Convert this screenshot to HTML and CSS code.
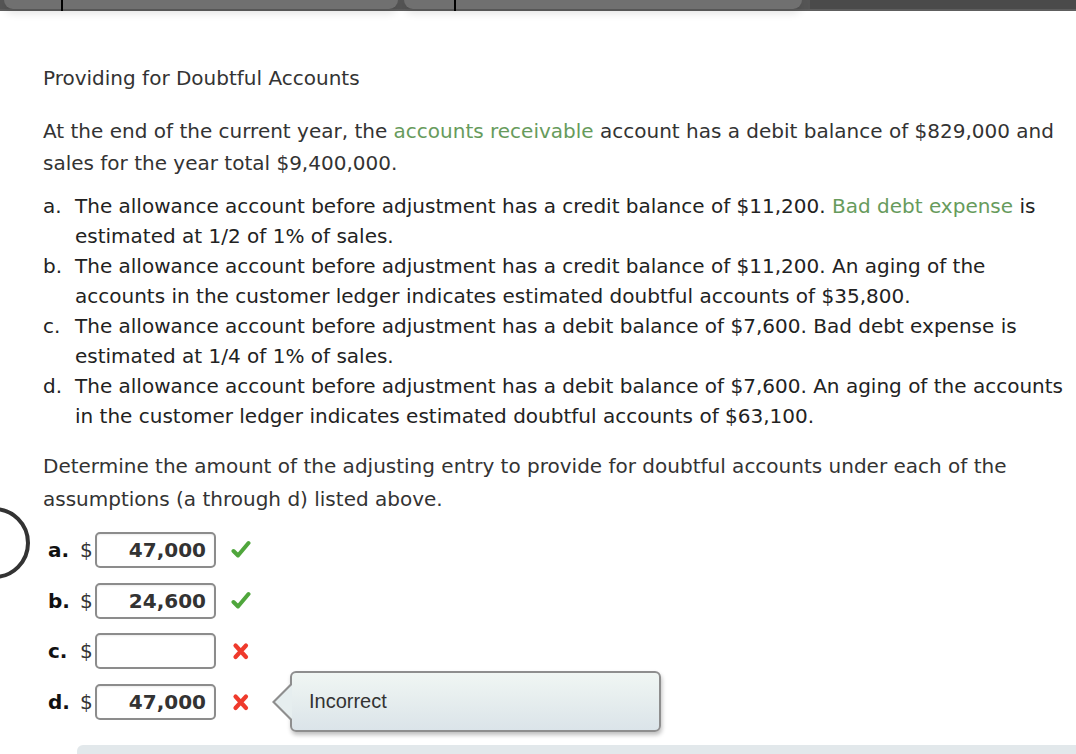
FILE: index.html
```html
<!DOCTYPE html>
<html lang="en">

<head>
    <meta charset="UTF-8">
    <meta name="viewport" content="width=device-width, initial-scale=1.0">
    <title>Providing for Doubtful Accounts</title>
    <link rel="stylesheet" href="styles.css">
</head>

<body>
    <div class="topbar">
        <div class="tab"><span class="cursor cursor-1"></span></div>
        <div class="tab"><span class="cursor cursor-2"></span></div>
        <div class="rest"></div>
    </div>

    <svg class="ring" width="40" height="90" viewBox="0 0 40 90">
        <circle cx="-6" cy="45" r="34" fill="none" stroke="#333" stroke-width="4" />
    </svg>

    <div class="problem">
        <h1 class="title">Providing for Doubtful Accounts</h1>

        <p class="intro">At the end of the current year, the <span class="term">accounts receivable</span> account has a debit balance of $829,000 and<br>sales for the year total $9,400,000.</p>

        <ol class="cases">
            <li><span class="mark">a.</span><span>The allowance account before adjustment has a credit balance of $11,200. <span class="term">Bad debt expense</span> is<br>estimated at 1/2 of 1% of sales.</span></li>
            <li><span class="mark">b.</span><span>The allowance account before adjustment has a credit balance of $11,200. An aging of the<br>accounts in the customer ledger indicates estimated doubtful accounts of $35,800.</span></li>
            <li><span class="mark">c.</span><span>The allowance account before adjustment has a debit balance of $7,600. Bad debt expense is<br>estimated at 1/4 of 1% of sales.</span></li>
            <li><span class="mark">d.</span><span>The allowance account before adjustment has a debit balance of $7,600. An aging of the accounts<br>in the customer ledger indicates estimated doubtful accounts of $63,100.</span></li>
        </ol>

        <p class="ask">Determine the amount of the adjusting entry to provide for doubtful accounts under each of the<br>assumptions (a through d) listed above.</p>

        <div class="answers">
            <div class="row">
                <span class="label">a.</span><span class="dollar">$</span>
                <div class="field">47,000</div>
                <svg class="icon" width="20" height="20" viewBox="0 0 20 20"><path d="M2.5 11 L7 15.5 L17.5 3" fill="none" stroke="#4fa63c" stroke-width="4" stroke-linecap="round" stroke-linejoin="round" /></svg>
            </div>
            <div class="row">
                <span class="label">b.</span><span class="dollar">$</span>
                <div class="field">24,600</div>
                <svg class="icon" width="20" height="20" viewBox="0 0 20 20"><path d="M2.5 11 L7 15.5 L17.5 3" fill="none" stroke="#4fa63c" stroke-width="4" stroke-linecap="round" stroke-linejoin="round" /></svg>
            </div>
            <div class="row">
                <span class="label">c.</span><span class="dollar">$</span>
                <div class="field"></div>
                <svg class="icon" width="20" height="20" viewBox="0 0 20 20"><path d="M4.5 4.5 L15 16 M15 4.5 L4.5 16" fill="none" stroke="#ef3a2c" stroke-width="4.2" stroke-linecap="round" /></svg>
            </div>
            <div class="row">
                <span class="label">d.</span><span class="dollar">$</span>
                <div class="field">47,000</div>
                <svg class="icon" width="20" height="20" viewBox="0 0 20 20"><path d="M4.5 4.5 L15 16 M15 4.5 L4.5 16" fill="none" stroke="#ef3a2c" stroke-width="4.2" stroke-linecap="round" /></svg>
                <div class="tip">Incorrect</div>
            </div>
        </div>
    </div>

    <div class="footer-bar"></div>
</body>

</html>
```

FILE: styles.css
```css
* {
    margin: 0;
    padding: 0;
    box-sizing: border-box;
}

body {
    width: 1076px;
    height: 754px;
    overflow: hidden;
    position: relative;
    background: #fff;
    font-family: "DejaVu Sans", Verdana, sans-serif;
    color: #333;
}

ol,
li {
    list-style: none;
}

/* top toolbar */
.topbar {
    height: 11px;
    display: flex;
    background: #555;
    border-bottom: 2px solid #5e5e5e;
}

.tab {
    position: relative;
    width: 398px;
    margin-left: 6px;
    background: #707070;
    border-radius: 0 0 9px 9px;
    box-shadow: 0 4px 8px rgba(0, 0, 0, 0.12);
}

.tab:first-child {
    margin-left: 4px;
    width: 394px;
}

.cursor {
    position: absolute;
    top: 0;
    width: 2px;
    height: 11px;
    background: #000;
}

.cursor-1 {
    left: 57px;
}

.cursor-2 {
    left: 50px;
}

.rest {
    flex: 1;
    margin-left: 8px;
    background: #4a4a4a;
}

.ring {
    position: absolute;
    left: 0;
    top: 498px;
}

/* problem text */
.problem {
    padding: 55px 0 0 43px;
}

.title {
    font-size: 20px;
    font-weight: normal;
    line-height: 24px;
    color: #333;
}

.intro {
    margin-top: 25px;
    font-size: 20px;
    line-height: 32px;
    color: #333;
}

.term {
    color: #679b5c;
}

.cases {
    margin-top: 12px;
    font-size: 20px;
    line-height: 30px;
    color: #222;
}

.cases li {
    display: flex;
}

.cases .mark {
    width: 32px;
    flex: none;
}

.ask {
    margin-top: 19px;
    font-size: 20px;
    line-height: 33px;
    color: #333;
}

/* answers */
.answers {
    margin-top: 9px;
    padding-left: 5px;
}

.row {
    position: relative;
    display: flex;
    align-items: center;
    height: 50.5px;
    font-size: 20px;
}

.label {
    width: 32px;
    font-weight: bold;
    color: #111;
}

.dollar {
    width: 15px;
    color: #333;
}

.field {
    width: 121px;
    height: 36px;
    border: 2px solid #8c8c8c;
    border-radius: 5px;
    padding-right: 8px;
    text-align: right;
    font-weight: bold;
    line-height: 32px;
    color: #333;
    box-shadow: inset 0 1px 2px rgba(0, 0, 0, 0.08);
}

.icon {
    margin-left: 15px;
}

.tip {
    position: absolute;
    left: 242px;
    top: -6px;
    width: 371px;
    height: 61px;
    padding-left: 17px;
    border: 2px solid #8e8e8e;
    border-radius: 6px;
    background: linear-gradient(#f0f6f3, #dbe4e9);
    box-shadow: 1px 3px 4px rgba(0, 0, 0, 0.25);
    font-family: "Liberation Sans", Arial, sans-serif;
    font-size: 20px;
    line-height: 57px;
    color: #333;
}

.tip::before {
    content: "";
    position: absolute;
    left: -20px;
    top: 10px;
    border: 19px solid transparent;
    border-left: none;
    border-right: 19px solid #8e8e8e;
}

.tip::after {
    content: "";
    position: absolute;
    left: -17px;
    top: 12px;
    border: 17px solid transparent;
    border-left: none;
    border-right: 17px solid #e6eeef;
}

.footer-bar {
    position: absolute;
    left: 77px;
    right: 0;
    top: 745px;
    height: 20px;
    background: #e2e8eb;
    border-radius: 6px 0 0 0;
}
```
